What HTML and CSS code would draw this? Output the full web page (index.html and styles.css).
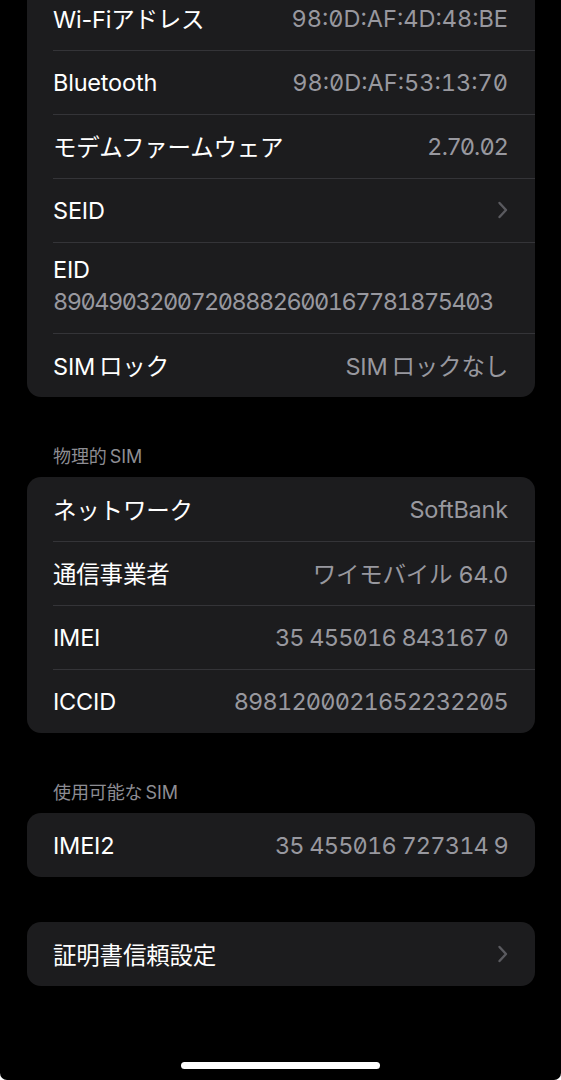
FILE: index.html
```html
<!DOCTYPE html>
<html lang="ja">
<head>
<meta charset="utf-8">
<title>情報</title>
<link rel="stylesheet" href="styles.css">
</head>
<body>
<div class="screen">
  <div class="content">
    <div class="card first">
      <div class="row"><span class="label">Wi-Fiアドレス</span><span class="value mac">98:0D:AF:4D:48:BE</span></div>
      <div class="row"><span class="label">Bluetooth</span><span class="value mac">98:0D:AF:53:13:70</span></div>
      <div class="row"><span class="label">モデムファームウェア</span><span class="value mono">2.70.02</span></div>
      <div class="row"><span class="label">SEID</span><svg class="chev" viewBox="0 0 12 18" width="12" height="18"><path d="M2.5 2 L9 9 L2.5 16" fill="none" stroke="currentColor" stroke-width="2.4" stroke-linecap="round" stroke-linejoin="round"/></svg></div>
      <div class="row tall"><span class="label">EID</span><span class="value eid">89049032007208882600167781875403</span></div>
      <div class="row"><span class="label"><span class="latin">SIM</span>ロック</span><span class="value"><span class="latin">SIM</span>ロックなし</span></div>
    </div>

    <div class="header">物理的<span class="latin-h">SIM</span></div>
    <div class="card">
      <div class="row"><span class="label">ネットワーク</span><span class="value">SoftBank</span></div>
      <div class="row"><span class="label">通信事業者</span><span class="value">ワイモバイル 64.0</span></div>
      <div class="row"><span class="label">IMEI</span><span class="value num">35 455016 843167 0</span></div>
      <div class="row"><span class="label">ICCID</span><span class="value num">8981200021652232205</span></div>
    </div>

    <div class="header">使用可能な<span class="latin-h">SIM</span></div>
    <div class="card">
      <div class="row"><span class="label">IMEI2</span><span class="value num">35 455016 727314 9</span></div>
    </div>

    <div class="card spaced">
      <div class="row"><span class="label">証明書信頼設定</span><svg class="chev" viewBox="0 0 12 18" width="12" height="18"><path d="M2.5 2 L9 9 L2.5 16" fill="none" stroke="currentColor" stroke-width="2.4" stroke-linecap="round" stroke-linejoin="round"/></svg></div>
    </div>
  </div>
  <div class="home-bar"></div>
</div>
</body>
</html>
```

FILE: styles.css
```css
html, body {
  margin: 0;
  padding: 0;
  background: #ffffff;
}

.screen {
  width: 561px;
  height: 1080px;
  background: #000000;
  border-radius: 0 0 7px 7px;
  overflow: hidden;
  display: flex;
  flex-direction: column;
  font-family: Inter, "Noto Sans CJK JP", sans-serif;
  color: #ffffff;
}

.content {
  flex: 1;
  padding: 0 26px 0 27px;
  display: flex;
  flex-direction: column;
}

.card {
  background: #1c1c1e;
  border-radius: 14px;
  overflow: hidden;
}

.card.first {
  margin-top: -14px;
  border-radius: 0 0 14px 14px;
}

.card.spaced {
  margin-top: 45px;
}

.row {
  position: relative;
  height: 64px;
  padding: 0 27px 0 26px;
  display: flex;
  align-items: center;
  justify-content: space-between;
  font-size: 23.5px;
  letter-spacing: -0.2px;
}

.row + .row::before {
  content: "";
  position: absolute;
  top: 0;
  left: 26px;
  right: 0;
  height: 1px;
  background: #343438;
}

.row.tall {
  height: 91px;
  box-sizing: border-box;
  padding-top: 12px;
  padding-bottom: 15px;
  flex-direction: column;
  align-items: flex-start;
  justify-content: flex-start;
}

.row.tall .label,
.row.tall .value {
  line-height: 32px;
}

.label {
  color: #ffffff;
  white-space: nowrap;
}

.value {
  color: #98989f;
  white-space: nowrap;
}

.mono {
  font-feature-settings: "zero" 1;
  letter-spacing: -0.4px;
}

.mac {
  font-feature-settings: "tnum" 1, "zero" 1;
  letter-spacing: 0;
}

.num {
  font-feature-settings: "tnum" 1, "zero" 1;
  letter-spacing: -0.8px;
}

.eid {
  font-feature-settings: "tnum" 1, "zero" 1;
  letter-spacing: -1.5px;
}

.latin {
  margin-right: 4px;
}

.latin-h {
  margin-left: 3px;
}

.chev {
  color: #5a5a5f;
  margin-right: -1px;
}

.header {
  margin: 49px 0 9px 26px;
  font-size: 18px;
  line-height: 22px;
  color: #8d8d93;
  letter-spacing: -0.1px;
}

.home-bar {
  align-self: center;
  width: 199px;
  height: 7px;
  border-radius: 4px;
  background: #ffffff;
  margin-bottom: 11px;
}
```
